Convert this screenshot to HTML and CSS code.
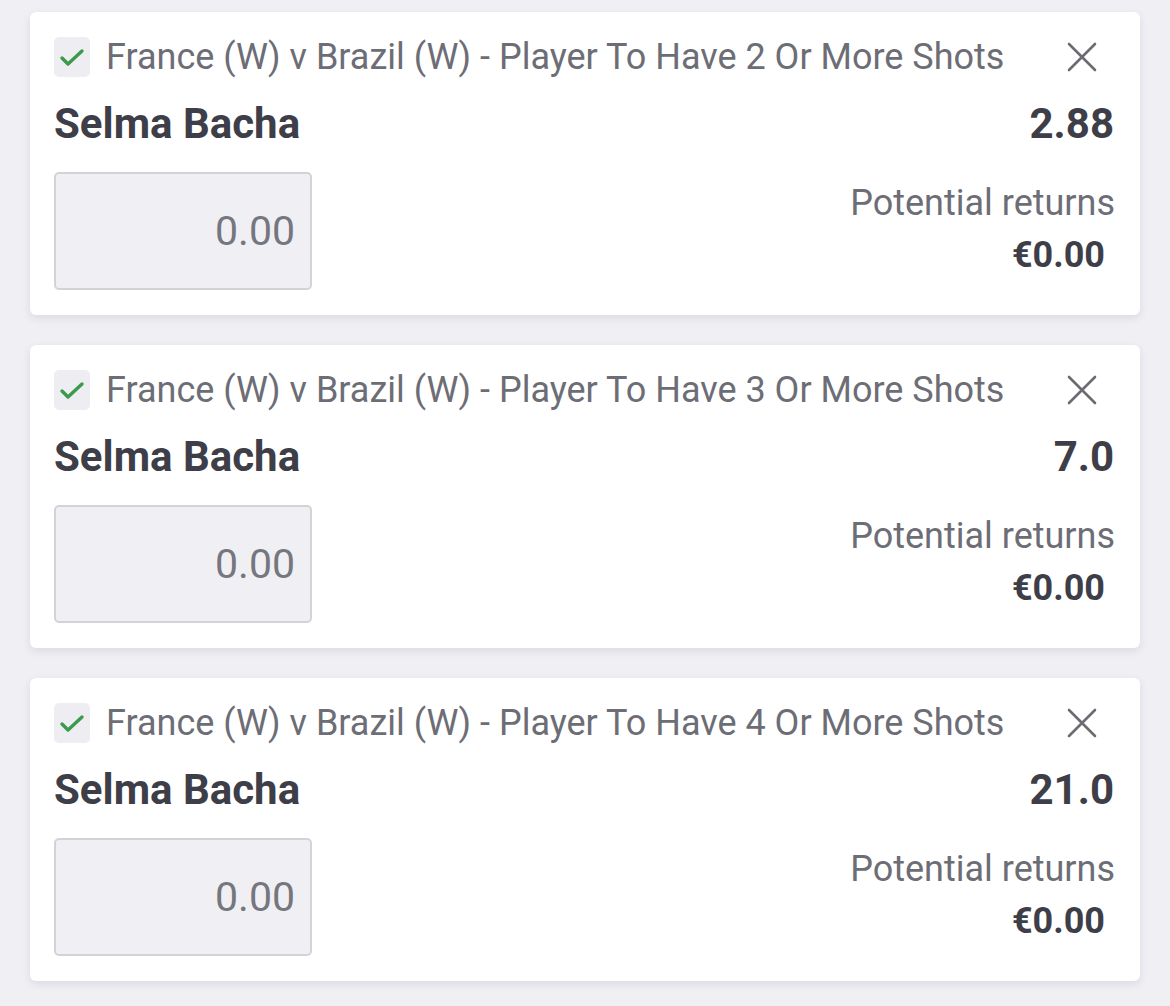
FILE: index.html
```html
<!DOCTYPE html>
<html lang="en">
<head>
<meta charset="utf-8">
<title>Bet slip</title>
<link rel="stylesheet" href="styles.css">
</head>
<body>
<main class="slip">
  <section class="card">
    <div class="head">
      <span class="check"><svg viewBox="0 0 36 40" width="36" height="40"><polyline points="8,21 14,27 28,14" fill="none" stroke="#3b9a4c" stroke-width="3.4" stroke-linecap="round" stroke-linejoin="round"/></svg></span>
      <span class="market">France (W) v Brazil (W) - Player To Have 2 Or More Shots</span>
      <span class="close"><svg viewBox="0 0 30 30" width="30" height="30"><path d="M2 2 L28 28 M28 2 L2 28" stroke="#6b6b74" stroke-width="2.6" stroke-linecap="round"/></svg></span>
    </div>
    <div class="sel">
      <span class="name">Selma Bacha</span>
      <span class="odds">2.88</span>
    </div>
    <div class="stake-row">
      <div class="stake">0.00</div>
      <div class="returns">
        <div class="ret-label">Potential returns</div>
        <div class="ret-value">€0.00</div>
      </div>
    </div>
  </section>
  <section class="card">
    <div class="head">
      <span class="check"><svg viewBox="0 0 36 40" width="36" height="40"><polyline points="8,21 14,27 28,14" fill="none" stroke="#3b9a4c" stroke-width="3.4" stroke-linecap="round" stroke-linejoin="round"/></svg></span>
      <span class="market">France (W) v Brazil (W) - Player To Have 3 Or More Shots</span>
      <span class="close"><svg viewBox="0 0 30 30" width="30" height="30"><path d="M2 2 L28 28 M28 2 L2 28" stroke="#6b6b74" stroke-width="2.6" stroke-linecap="round"/></svg></span>
    </div>
    <div class="sel">
      <span class="name">Selma Bacha</span>
      <span class="odds">7.0</span>
    </div>
    <div class="stake-row">
      <div class="stake">0.00</div>
      <div class="returns">
        <div class="ret-label">Potential returns</div>
        <div class="ret-value">€0.00</div>
      </div>
    </div>
  </section>
  <section class="card">
    <div class="head">
      <span class="check"><svg viewBox="0 0 36 40" width="36" height="40"><polyline points="8,21 14,27 28,14" fill="none" stroke="#3b9a4c" stroke-width="3.4" stroke-linecap="round" stroke-linejoin="round"/></svg></span>
      <span class="market">France (W) v Brazil (W) - Player To Have 4 Or More Shots</span>
      <span class="close"><svg viewBox="0 0 30 30" width="30" height="30"><path d="M2 2 L28 28 M28 2 L2 28" stroke="#6b6b74" stroke-width="2.6" stroke-linecap="round"/></svg></span>
    </div>
    <div class="sel">
      <span class="name">Selma Bacha</span>
      <span class="odds">21.0</span>
    </div>
    <div class="stake-row">
      <div class="stake">0.00</div>
      <div class="returns">
        <div class="ret-label">Potential returns</div>
        <div class="ret-value">€0.00</div>
      </div>
    </div>
  </section>
</main>
</body>
</html>
```
FILE: styles.css
```css
html, body {
  margin: 0;
  padding: 0;
  background: #efeff4;
  font-family: Roboto, "Liberation Sans", sans-serif;
}

.slip {
  display: flex;
  flex-direction: column;
  gap: 30px;
  padding: 12px 30px;
}

.card {
  background: #ffffff;
  border-radius: 6px;
  box-shadow: 0 3px 8px rgba(40, 40, 60, 0.10);
  padding: 24px 26px 25px 24px;
}

.head {
  display: flex;
  align-items: center;
  height: 41px;
}

.check {
  width: 36px;
  height: 40px;
  border-radius: 5px;
  background: #eeeef2;
  display: flex;
  flex: none;
}

.market {
  margin-left: 16px;
  padding-top: 2px;
  font-size: 36px;
  line-height: 41px;
  color: #6d6d76;
  flex: 1;
  white-space: nowrap;
}

.close {
  width: 30px;
  height: 30px;
  display: flex;
  margin-right: 17px;
  flex: none;
}

.sel {
  display: flex;
  justify-content: space-between;
  margin-top: 22px;
  font-size: 42px;
  line-height: 49px;
  font-weight: 700;
  color: #3e3e48;
}

.stake-row {
  display: flex;
  justify-content: space-between;
  align-items: flex-start;
  margin-top: 24px;
}

.stake {
  width: 258px;
  height: 118px;
  box-sizing: border-box;
  border: 2px solid #d3d3d7;
  border-radius: 5px;
  background: #f0f0f4;
  display: flex;
  align-items: center;
  justify-content: flex-end;
  padding-right: 15px;
  font-size: 41px;
  color: #76767e;
}

.returns {
  margin-top: 10px;
  margin-right: -1px;
  text-align: right;
}

.ret-label {
  font-size: 36px;
  line-height: 42px;
  color: #6d6d76;
}

.ret-value {
  margin-top: 10px;
  margin-right: 10px;
  font-size: 36px;
  line-height: 42px;
  font-weight: 700;
  color: #3e3e48;
}
```
